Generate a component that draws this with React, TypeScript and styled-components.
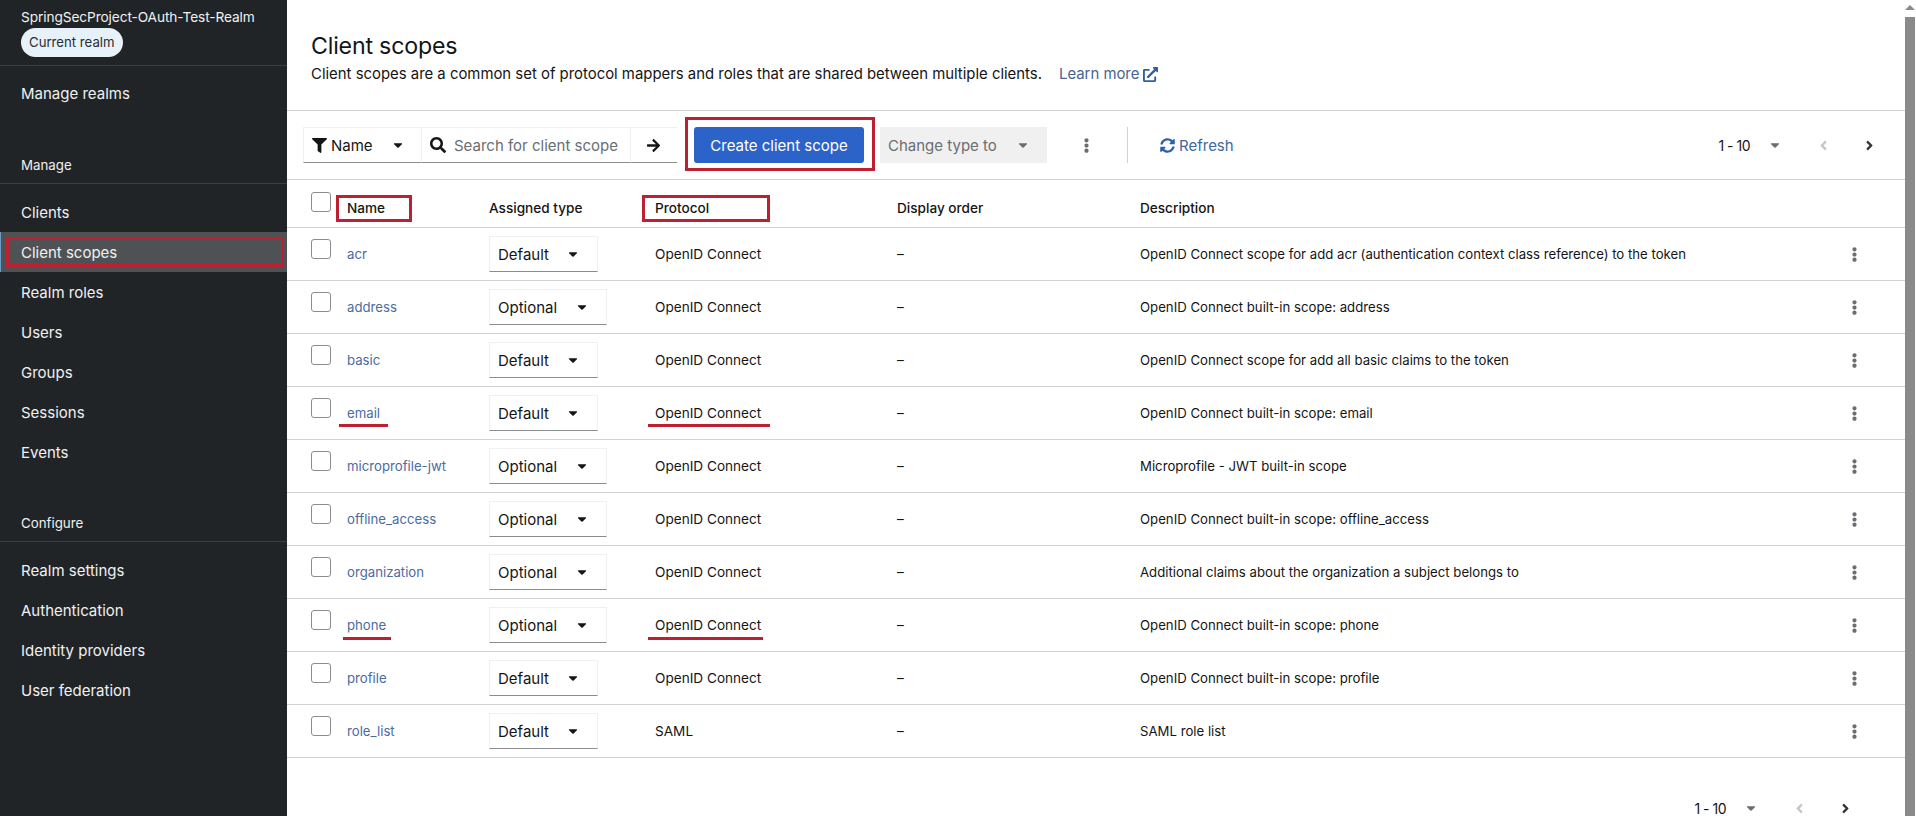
import React from "react";
import styled, { createGlobalStyle } from "styled-components";
import {
  FaFilter,
  FaSearch,
  FaArrowRight,
  FaEllipsisV,
  FaSyncAlt,
  FaExternalLinkAlt,
  FaCaretDown,
  FaAngleLeft,
  FaAngleRight,
} from "react-icons/fa";

const RED = "#bd2030";
const FONT = `Inter, "Noto Sans", "Liberation Sans", sans-serif`;

const Global = createGlobalStyle`
  html, body { margin: 0; padding: 0; height: 100%; overflow: hidden; background: #fff; }
  body { font-family: ${FONT}; font-size: 15px; color: #151515; }
  * { box-sizing: border-box; }
`;

const Page = styled.div`
  display: flex;
  width: 1916px;
  height: 816px;
  overflow: hidden;
`;

const Sidebar = styled.nav`
  width: 287px;
  flex: none;
  background: #212427;
  color: #f0f0f0;
`;

const RealmHeader = styled.div`
  height: 66px;
  padding: 8px 0 0 21px;
  border-bottom: 1px solid #3c3f42;
`;

const RealmName = styled.div`
  font-size: 13.7px;
  line-height: 18px;
  letter-spacing: -0.1px;
`;

const RealmChip = styled.span`
  display: inline-block;
  margin-top: 2px;
  height: 29px;
  line-height: 29px;
  padding: 0 8px;
  border-radius: 15px;
  background: #e7f1fa;
  color: #2a2d30;
  font-size: 13.2px;
`;

const NavList = styled.div<{ $top: number }>`
  margin-top: ${(p) => p.$top}px;
`;

const NavItem = styled.a<{ $active?: boolean }>`
  position: relative;
  display: flex;
  align-items: center;
  height: 40px;
  padding-left: ${(p) => (p.$active ? 20 : 21)}px;
  font-size: 15px;
  color: #f0f0f0;
  background: ${(p) => (p.$active ? "#4f5255" : "transparent")};
  border-left: ${(p) => (p.$active ? "1px solid #6d9cc7" : "none")};
`;

const NavMark = styled.span`
  position: absolute;
  left: 5px;
  top: 5px;
  width: 278px;
  height: 30px;
  border: 3px solid ${RED};
`;

const NavTitle = styled.div<{ $top: number }>`
  margin-top: ${(p) => p.$top}px;
  height: 39px;
  padding: 11px 0 0 21px;
  border-bottom: 1px solid #3c3f42;
  font-size: 13.3px;
  line-height: 18px;
`;

const Main = styled.main`
  flex: 1;
  min-width: 0;
`;

const PageHead = styled.header`
  height: 111px;
  padding: 31px 0 0 24px;
  border-bottom: 1px solid #d2d2d2;
`;

const Title = styled.h1`
  margin: 0;
  font-size: 23.2px;
  font-weight: 400;
  line-height: 30px;
  letter-spacing: -0.2px;
`;

const Subtitle = styled.p`
  margin: 3px 0 0;
  font-size: 14.9px;
  line-height: 20px;
  display: flex;
  align-items: center;
`;

const LearnMore = styled.a`
  margin-left: 17px;
  display: inline-flex;
  align-items: center;
  gap: 4px;
  color: #47658f;
  svg { color: #2f5f9e; width: 15px; height: 15px; }
`;

const Toolbar = styled.div`
  height: 69px;
  padding-left: 16px;
  display: flex;
  align-items: center;
  border-bottom: 1px solid #d2d2d2;
`;

const InputCell = styled.div<{ $w: number; $pad?: number }>`
  width: ${(p) => p.$w}px;
  height: 36px;
  flex: none;
  display: flex;
  align-items: center;
  padding-left: ${(p) => p.$pad ?? 8}px;
  border: 1px solid #f0f0f0;
  border-right: none;
  border-bottom: 1px solid #8a8d90;
  background: #fff;
  &:last-of-type { border-right: 1px solid #f0f0f0; }
`;

const FilterName = styled.span`
  margin-left: 4px;
  flex: 1;
`;

const FilterGlyph = styled(FaFilter)`
  width: 15px;
  height: 15px;
`;

const CaretSlot = styled.span<{ $right: number; $color?: string }>`
  margin-right: ${(p) => p.$right}px;
  display: inline-flex;
  color: ${(p) => p.$color ?? "#151515"};
  svg { width: 14px; height: 14px; }
`;

const SearchGlyph = styled(FaSearch)`
  width: 16px;
  height: 16px;
  margin-right: 8px;
`;

const Placeholder = styled.span`
  color: #6a6e73;
  white-space: nowrap;
`;

const Marked = styled.span`
  position: relative;
  display: inline-block;
`;

const RedBox = styled.span<{ $l: number; $t: number; $w: number; $h: number }>`
  position: absolute;
  left: ${(p) => p.$l}px;
  top: ${(p) => p.$t}px;
  width: ${(p) => p.$w}px;
  height: ${(p) => p.$h}px;
  border: 3px solid ${RED};
  pointer-events: none;
`;

const RedLine = styled.span<{ $l: number; $t: number; $w: number }>`
  position: absolute;
  left: ${(p) => p.$l}px;
  top: ${(p) => p.$t}px;
  width: ${(p) => p.$w}px;
  height: 3px;
  background: ${RED};
`;

const PrimaryButton = styled.button`
  display: block;
  width: 170px;
  height: 36px;
  padding: 0;
  border: none;
  border-radius: 3px;
  background: #2b63c9;
  color: #fff;
  font: 15px ${FONT};
`;

const CreateWrap = styled(Marked)`
  margin-left: 17px;
  height: 36px;
`;

const DisabledSelect = styled.div`
  margin-left: 16px;
  width: 167px;
  height: 36px;
  padding: 0 0 0 8px;
  display: flex;
  align-items: center;
  justify-content: space-between;
  background: #f0f0f0;
  color: #6a6e73;
`;

const Kebab = styled(FaEllipsisV)<{ $left?: number }>`
  flex: none;
  width: 15px;
  height: 15px;
  color: #6a6e73;
  margin-left: ${(p) => p.$left ?? 0}px;
`;

const Divider = styled.span`
  margin-left: 33px;
  width: 1px;
  height: 36px;
  background: #d2d2d2;
`;

const RefreshLink = styled.a`
  margin-left: 32px;
  display: flex;
  align-items: center;
  gap: 4px;
  color: #3f689f;
  svg { width: 15px; height: 15px; color: #2d5fb0; }
`;

const Pager = styled.div<{ $right: number }>`
  margin-left: auto;
  padding-right: ${(p) => p.$right}px;
  display: flex;
  align-items: center;
  justify-content: flex-end;
`;

const PagerRange = styled.span`
  margin-right: 18px;
  font-size: 14px;
  letter-spacing: -0.5px;
`;

const PagerCaret = styled(FaCaretDown)`
  width: 14px;
  height: 14px;
  color: #6a6e73;
`;

const PagerArrow = styled.span<{ $off?: boolean; $left: number }>`
  display: inline-flex;
  margin-left: ${(p) => p.$left}px;
  color: ${(p) => (p.$off ? "#c4c6c8" : "#33373a")};
  svg { width: 15px; height: 15px; }
`;

const Grid = styled.div<{ $h: number }>`
  display: grid;
  grid-template-columns: 36px 142px 166px 242px 243px 1fr;
  height: ${(p) => p.$h}px;
  padding-left: 24px;
  border-bottom: 1px solid #d2d2d2;
  position: relative;
`;

const HeadCell = styled.div`
  padding-top: 18px;
  font-weight: 500;
  font-size: 13.6px;
  line-height: 20px;
  position: relative;
`;

const CheckCell = styled.div<{ $top: number }>`
  padding-top: ${(p) => p.$top}px;
`;

const Check = styled.span`
  display: block;
  width: 20px;
  height: 20px;
  border: 1px solid #8a8d90;
  border-radius: 3px;
  background: #fff;
`;

const Cell = styled.div<{ $size?: number }>`
  display: flex;
  align-items: center;
  position: relative;
  font-size: ${(p) => p.$size ?? 13.6}px;
`;

const NameLink = styled.a`
  color: #4b6c9f;
  font-size: 13.2px;
`;

const TypeSelect = styled.div<{ $w: number }>`
  width: ${(p) => p.$w}px;
  height: 36px;
  padding: 0 0 0 8px;
  display: flex;
  align-items: center;
  justify-content: space-between;
  border: 1px solid #f0f0f0;
  border-bottom-color: #8a8d90;
  font-size: 15px;
`;

const DescCell = styled(Cell)`
  justify-content: space-between;
  padding-right: 43px;
`;

const FooterPager = styled.div`
  height: 59px;
  padding-top: 41px;
  display: flex;
`;

type Row = {
  name: string;
  type: "Default" | "Optional";
  protocol: string;
  desc: string;
  line?: { nameL: number; nameW: number; protoW: number; top: number };
};

const rows: Row[] = [
  { name: "acr", type: "Default", protocol: "OpenID Connect", desc: "OpenID Connect scope for add acr (authentication context class reference) to the token" },
  { name: "address", type: "Optional", protocol: "OpenID Connect", desc: "OpenID Connect built-in scope: address" },
  { name: "basic", type: "Default", protocol: "OpenID Connect", desc: "OpenID Connect scope for add all basic claims to the token" },
  { name: "email", type: "Default", protocol: "OpenID Connect", desc: "OpenID Connect built-in scope: email", line: { nameL: -8, nameW: 49, protoW: 122, top: 37 } },
  { name: "microprofile-jwt", type: "Optional", protocol: "OpenID Connect", desc: "Microprofile - JWT built-in scope" },
  { name: "offline_access", type: "Optional", protocol: "OpenID Connect", desc: "OpenID Connect built-in scope: offline_access" },
  { name: "organization", type: "Optional", protocol: "OpenID Connect", desc: "Additional claims about the organization a subject belongs to" },
  { name: "phone", type: "Optional", protocol: "OpenID Connect", desc: "OpenID Connect built-in scope: phone", line: { nameL: -4, nameW: 48, protoW: 115, top: 38 } },
  { name: "profile", type: "Default", protocol: "OpenID Connect", desc: "OpenID Connect built-in scope: profile" },
  { name: "role_list", type: "Default", protocol: "SAML", desc: "SAML role list" },
];

const manage = ["Clients", "Client scopes", "Realm roles", "Users", "Groups", "Sessions", "Events"];
const configure = ["Realm settings", "Authentication", "Identity providers", "User federation"];

const ScrollBar = styled.aside`
  width: 11px;
  flex: none;
  background: #fff;
  padding: 5px 1px 0 0;
  display: flex;
  flex-direction: column;
`;

const ScrollArrow = styled.span`
  width: 0;
  height: 0;
  border-left: 5px solid transparent;
  border-right: 5px solid transparent;
  border-bottom: 5px solid #8a8a8a;
`;

const ScrollThumb = styled.span`
  margin-top: 7px;
  flex: 1;
  background: #8a8a8a;
`;

export default function App() {
  return (
    <Page>
      <Global />
      <Sidebar>
        <RealmHeader>
          <RealmName>SpringSecProject-OAuth-Test-Realm</RealmName>
          <RealmChip>Current realm</RealmChip>
        </RealmHeader>
        <NavList $top={7}>
          <NavItem>Manage realms</NavItem>
        </NavList>
        <NavTitle $top={32}>Manage</NavTitle>
        <NavList $top={8}>
          {manage.map((m) => (
            <NavItem key={m} $active={m === "Client scopes"}>
              {m}
              {m === "Client scopes" && <NavMark />}
            </NavItem>
          ))}
        </NavList>
        <NavTitle $top={31}>Configure</NavTitle>
        <NavList $top={8}>
          {configure.map((m) => (
            <NavItem key={m}>{m}</NavItem>
          ))}
        </NavList>
      </Sidebar>
      <Main>
        <PageHead>
          <Title>Client scopes</Title>
          <Subtitle>
            Client scopes are a common set of protocol mappers and roles that are shared between multiple clients.
            <LearnMore>
              Learn more <FaExternalLinkAlt />
            </LearnMore>
          </Subtitle>
        </PageHead>
        <Toolbar>
          <InputCell $w={118}>
            <FilterGlyph />
            <FilterName>Name</FilterName>
            <CaretSlot $right={16}>
              <FaCaretDown />
            </CaretSlot>
          </InputCell>
          <InputCell $w={209}>
            <SearchGlyph />
            <Placeholder>Search for client scope</Placeholder>
          </InputCell>
          <InputCell $w={47} $pad={15}>
            <FaArrowRight size={15} />
          </InputCell>
          <CreateWrap>
            <PrimaryButton>Create client scope</PrimaryButton>
            <RedBox $l={-9} $t={-10} $w={190} $h={54} />
          </CreateWrap>
          <DisabledSelect>
            Change type to
            <CaretSlot $right={17} $color="#6a6e73">
              <FaCaretDown />
            </CaretSlot>
          </DisabledSelect>
          <Kebab $left={32} />
          <Divider />
          <RefreshLink>
            <FaSyncAlt />
            Refresh
          </RefreshLink>
          <Pager $right={28}>
            <PagerRange>1 - 10</PagerRange>
            <PagerCaret />
            <PagerArrow $off $left={34}>
              <FaAngleLeft />
            </PagerArrow>
            <PagerArrow $left={31}>
              <FaAngleRight />
            </PagerArrow>
          </Pager>
        </Toolbar>
        <Grid $h={48}>
          <CheckCell $top={12}>
            <Check />
          </CheckCell>
          <HeadCell>
            Name
            <RedBox $l={-11} $t={15} $w={76} $h={27} />
          </HeadCell>
          <HeadCell>Assigned type</HeadCell>
          <HeadCell>
            Protocol
            <RedBox $l={-13} $t={15} $w={128} $h={27} />
          </HeadCell>
          <HeadCell>Display order</HeadCell>
          <HeadCell>Description</HeadCell>
        </Grid>
        {rows.map((r) => (
          <Grid key={r.name} $h={53}>
            <CheckCell $top={11}>
              <Check />
            </CheckCell>
            <Cell>
              <NameLink>{r.name}</NameLink>
              {r.line && <RedLine $l={r.line.nameL} $t={r.line.top} $w={r.line.nameW} />}
            </Cell>
            <Cell>
              <TypeSelect $w={r.type === "Default" ? 109 : 118}>
                {r.type}
                <CaretSlot $right={17}>
                  <FaCaretDown />
                </CaretSlot>
              </TypeSelect>
            </Cell>
            <Cell>
              {r.protocol}
              {r.line && <RedLine $l={-7} $t={r.line.top} $w={r.line.protoW} />}
            </Cell>
            <Cell>–</Cell>
            <DescCell $size={13.2}>
              {r.desc}
              <Kebab />
            </DescCell>
          </Grid>
        ))}
        <FooterPager>
          <Pager $right={52}>
            <PagerRange>1 - 10</PagerRange>
            <PagerCaret />
            <PagerArrow $off $left={34}>
              <FaAngleLeft />
            </PagerArrow>
            <PagerArrow $left={31}>
              <FaAngleRight />
            </PagerArrow>
          </Pager>
        </FooterPager>
      </Main>
      <ScrollBar>
        <ScrollArrow />
        <ScrollThumb />
      </ScrollBar>
    </Page>
  );
}
